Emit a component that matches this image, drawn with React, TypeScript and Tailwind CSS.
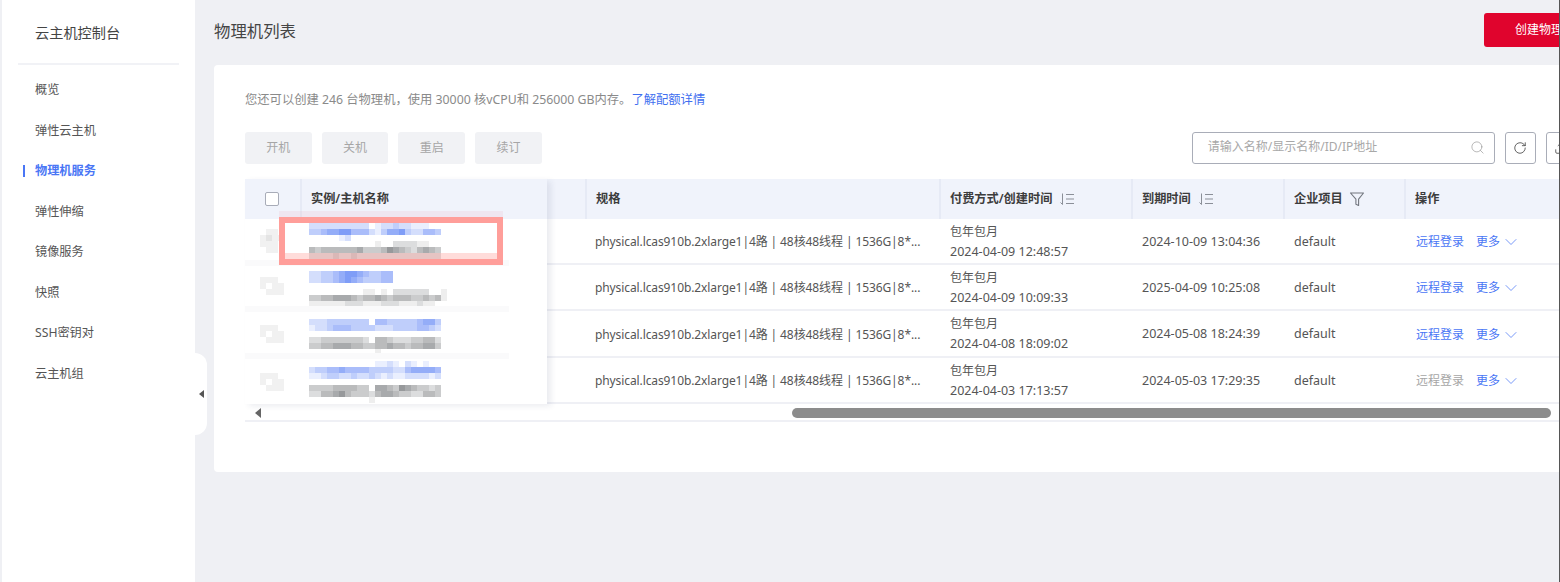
import React from "react";
import { ChevronDown, RotateCw, Search, Upload } from "lucide-react";

const BLUE = "#5f84f5";
const GRAY = "#7d7f82";

type Band = { c: "b" | "g"; s: string };

function Mosaic({ bands, cols = 23 }: { bands: Band[]; cols?: number }) {
  return (
    <svg width={cols * 6} height={bands.length * 6} className="block shrink-0" shapeRendering="crispEdges">
      {bands.map((b, y) =>
        b.s.split("").map((ch, x) =>
          ch === "0" ? null : (
            <rect key={`${y}-${x}`} x={x * 6} y={y * 6} width={6} height={6} fill={b.c === "b" ? BLUE : GRAY} opacity={Number(ch) / 7.5} />
          ),
        ),
      )}
    </svg>
  );
}

const rows = [
  {
    h: "h-[46px]",
    pt: "pt-[4px]",
    boxPt: "pt-[10px]",
    box: ["0110", "1211", "1110", "0110"],
    bands: [
      { c: "b", s: "2222222222012232211100" },
      { c: "b", s: "3345566444213556322443" },
      { c: "b", s: "0000012000000000000000" },
      { c: "g", s: "0000000000010022221100" },
      { c: "g", s: "4344444453334654324543" },
      { c: "g", s: "2222322322222222222222" },
    ] as Band[],
    spec: "2024-04-09 12:48:57",
    expire: "2024-10-09 13:04:36",
    link: true,
    band: true,
  },
  {
    h: "h-[46px]",
    pt: "pt-[6px]",
    boxPt: "pt-[12px]",
    box: ["1110", "1011", "0111"],
    bands: [
      { c: "b", s: "2233456654334400000000" },
      { c: "b", s: "2233456543334400000000" },
      { c: "b", s: "0000000000000000000000" },
      { c: "g", s: "00000000011010222222001" },
      { c: "g", s: "33445554344543444334341" },
      { c: "g", s: "11111122211122211121100" },
    ] as Band[],
    spec: "2024-04-09 10:09:33",
    expire: "2025-04-09 10:25:08",
    link: true,
    band: true,
  },
  {
    h: "h-[47px]",
    pt: "pt-[8px]",
    boxPt: "pt-[14px]",
    box: ["1110", "1011", "0111"],
    bands: [
      { c: "b", s: "2223333333044333334553" },
      { c: "b", s: "1223444333322233334432" },
      { c: "b", s: "0000000000000000000000" },
      { c: "g", s: "2233333332044322233442" },
      { c: "g", s: "3344555443344544344553" },
      { c: "g", s: "0000000000010000000000" },
    ] as Band[],
    spec: "2024-04-08 18:09:02",
    expire: "2024-05-08 18:24:39",
    link: true,
    band: true,
  },
  {
    h: "h-[46px]",
    pt: "pt-[3px]",
    boxPt: "pt-[15px]",
    box: ["1110", "1011", "0111"],
    bands: [
      { c: "b", s: "0000000000011210210100" },
      { c: "b", s: "2334454444333322455554" },
      { c: "b", s: "1123322322321211222212" },
      { c: "b", s: "0000000000000000000000" },
      { c: "g", s: "3333444433055436543323" },
      { c: "g", s: "2244564333245543322443" },
      { c: "g", s: "0000000000100000000000" },
    ] as Band[],
    spec: "2024-04-03 17:13:57",
    expire: "2024-05-03 17:29:35",
    link: false,
    band: false,
  },
];

function SortIcon() {
  return (
    <svg width="16" height="14" viewBox="0 0 16 14" fill="none" stroke="#8b8f98" strokeWidth="1" className="ml-[7px]">
      <path d="M3.5 1.5V12.5M1.5 10.5L3.5 12.5" />
      <path d="M7 2.5H15M7 7H15M7 11.5H15" />
    </svg>
  );
}

function FilterIcon() {
  return (
    <svg width="16" height="16" viewBox="0 0 16 16" fill="none" stroke="#73777f" strokeWidth="1.1" className="ml-[6px]">
      <path d="M1.5 2H14.5L9.6 8.2V14.5L6.9 13.3V8.2Z" strokeLinejoin="round" />
    </svg>
  );
}

function Head({ w, children, line = true }: { w: string; children?: React.ReactNode; line?: boolean }) {
  return (
    <div className={`${w} shrink-0 h-full flex items-center pl-[9px] text-[12.2px] font-semibold text-[#3c3c3c] ${line ? "border-l-2 border-[#e6eaf5]" : ""}`}>
      {children}
    </div>
  );
}

export default function App() {
  return (
    <div className="flex w-[1560px] h-[582px] overflow-hidden bg-[#eff0f4] font-['Noto_Sans','Noto_Sans_CJK_SC',sans-serif] text-[#555]">
      <div className="w-[2px] shrink-0 bg-[#eff0f4]" />
      <aside className="w-[193px] shrink-0 bg-white">
        <div className="h-[65px] mx-[16px] border-b-2 border-[#f1f2f6] pl-[17px] pt-[23px] text-[14.2px] leading-[20px] text-[#444]">云主机控制台</div>
        <nav className="pt-[5px] text-[12.2px] leading-[20px] text-[#555]">
          {["概览", "弹性云主机", "物理机服务", "弹性伸缩", "镜像服务", "快照", "SSH密钥对", "云主机组"].map((t) => {
            const active = t === "物理机服务";
            return (
              <div key={t} className="relative h-[40.5px] flex items-center pl-[33px]">
                {active && <span className="absolute left-[21px] top-[14px] w-[2px] h-[12px] bg-[#4a76f5]" />}
                <span className={active ? "text-[#4a76f5] font-semibold" : ""}>{t}</span>
              </div>
            );
          })}
        </nav>
      </aside>

      <main className="relative flex-1 min-w-0 overflow-hidden">
        <div className="absolute left-0 top-[353px] w-[12px] h-[82px] bg-white rounded-r-[12px] flex items-center pl-[4px]">
          <svg width="5" height="8" viewBox="0 0 5 8"><path d="M5 0V8L0 4Z" fill="#555" /></svg>
        </div>

        <header className="w-[1400px] h-[65px] pl-[19px] flex justify-between">
          <h1 className="mt-[19px] text-[16.4px] leading-[24px] text-[#444]">物理机列表</h1>
          <button className="mt-[13px] w-[111px] h-[34px] rounded-l-[3px] bg-[#e0042d] text-white text-[12px] text-left pl-[31px] whitespace-nowrap">创建物理机</button>
        </header>

        <section className="ml-[19px] w-[1400px] h-[407px] bg-white rounded-[4px] pl-[31px] pt-[27px]">
          <p className="text-[12.3px] leading-[16px] text-[#8a8a8a] whitespace-nowrap">
            您还可以创建 246 台物理机，使用 30000 核vCPU和 256000 GB内存。<span className="text-[#3f6ff0]">了解配额详情</span>
          </p>

          <div className="mt-[24px] h-[32px] flex items-stretch w-[1340px]">
            <div className="flex gap-[10px] shrink-0">
              {["开机", "关机", "重启", "续订"].map((t) => (
                <div key={t} className="w-[66.7px] rounded-[3px] bg-[#f1f2f5] flex items-center justify-center text-[12px] text-[#a6a6a6]">{t}</div>
              ))}
            </div>
            <div className="ml-[650px] w-[303px] shrink-0 rounded-[3px] border border-[#a9adb8] flex items-center pl-[15px] pr-[9px] pb-[2px] text-[12px] text-[#a8a8a8]">
              <span className="flex-1">请输入名称/显示名称/ID/IP地址</span>
              <Search size={15} strokeWidth={1} color="#8f8f8f" />
            </div>
            <div className="ml-[10px] w-[31px] shrink-0 rounded-[3px] border border-[#a9adb8] flex items-center justify-center">
              <RotateCw size={14} strokeWidth={1.4} color="#444" />
            </div>
            <div className="ml-[10px] w-[31px] shrink-0 rounded-[3px] border border-[#a9adb8] flex items-center justify-center">
              <Upload size={14} strokeWidth={1.4} color="#444" />
            </div>
          </div>

          <div className="relative mt-[15px] w-[1359px]">
            <div className="flex">
              <div className="relative z-10 w-[302px] shrink-0 bg-white shadow-[4px_2px_6px_rgba(30,40,90,0.09)]">
                <div className="flex h-[40px] bg-[#f0f3fb] items-center">
                  <div className="w-[55px] shrink-0 flex justify-center items-center h-full pr-[2px]">
                    <span className="block w-[14px] h-[14px] rounded-[2px] border border-[#a8acb8] bg-white" />
                  </div>
                  <Head w="w-[247px]">实例/主机名称</Head>
                </div>
                {rows.map((r) => (
                  <div key={r.expire} className={`relative flex ${r.h}`}>
                    <div className="w-[15px] shrink-0" />
                    <div className={`w-[49px] shrink-0 ${r.boxPt}`}>
                      <svg width="24" height="24" className="block" shapeRendering="crispEdges">
                        {r.box.map((l, y) =>
                          l.split("").map((c, x) =>
                            c === "0" ? null : <rect key={`${y}${x}`} x={x * 6} y={y * 6} width="6" height="6" fill="#777" opacity={Number(c) * 0.1} />,
                          ),
                        )}
                      </svg>
                    </div>
                    <div className={r.pt}>
                      <Mosaic bands={r.bands} />
                    </div>
                    {r.band && <span className="absolute left-0 -bottom-[1px] w-[264px] h-[6px] bg-[#fafafb]" />}
                  </div>
                ))}
              </div>

              <div className="flex-1 min-w-0">
                <div className="flex h-[40px] bg-[#f0f3fb]">
                  <Head w="w-[38px]" line={false} />
                  <Head w="w-[354px]">规格</Head>
                  <Head w="w-[192px]">付费方式/创建时间<SortIcon /></Head>
                  <Head w="w-[152px]">到期时间<SortIcon /></Head>
                  <Head w="w-[121px]">企业项目<FilterIcon /></Head>
                  <Head w="w-[200px]">操作</Head>
                </div>
                {rows.map((r) => (
                  <div key={r.spec} className={`flex ${r.h} border-b-2 border-[#eff0f5] items-center pt-[2px] text-[12.5px]`}>
                    <div className="w-[38px] shrink-0" />
                    <div className="w-[354px] shrink-0 pl-[10px] whitespace-nowrap text-[12px] tracking-[-0.1px]">physical.lcas910b.2xlarge1|4路 | 48核48线程 | 1536G|8*...</div>
                    <div className="w-[192px] shrink-0 pl-[11px] leading-[20px] -mt-[1px]">
                      <div className="text-[12px]">包年包月</div>
                      <div>{r.spec}</div>
                    </div>
                    <div className="w-[152px] shrink-0 pl-[11px]">{r.expire}</div>
                    <div className="w-[121px] shrink-0 pl-[11px]">default</div>
                    <div className="w-[200px] shrink-0 pl-[12px] flex items-center text-[12px] text-[#4a76f5]">
                      <span className={r.link ? "" : "text-[#a6a6a6]"}>远程登录</span>
                      <span className="ml-[12px]">更多</span>
                      <ChevronDown size={20} strokeWidth={0.9} className="ml-px" />
                    </div>
                  </div>
                ))}
              </div>
            </div>

            <div className="h-[18px] pt-[2px] border-b-2 border-[#eff0f5] flex items-center">
              <svg width="6" height="10" viewBox="0 0 6 10" className="ml-[10px]"><path d="M6 0V10L0 5Z" fill="#666" /></svg>
              <div className="ml-[531px] w-[759px] h-[10px] rounded-full bg-[#8c8c8c]" />
            </div>

            <div className="absolute z-20 left-[34px] top-[38px] w-[224px] h-[48px] border-[6px] border-[#ff9e9a]">
              <span className="absolute -left-[6px] -top-[12px] w-[224px] h-[6px] bg-[#e9a3b5]/15" />
              <span className="absolute left-0 right-0 bottom-0 h-[6px] bg-[#ff8a85]/30" />
            </div>
          </div>
        </section>
      </main>

      <div className="w-px shrink-0 bg-[#555]" />
    </div>
  );
}
